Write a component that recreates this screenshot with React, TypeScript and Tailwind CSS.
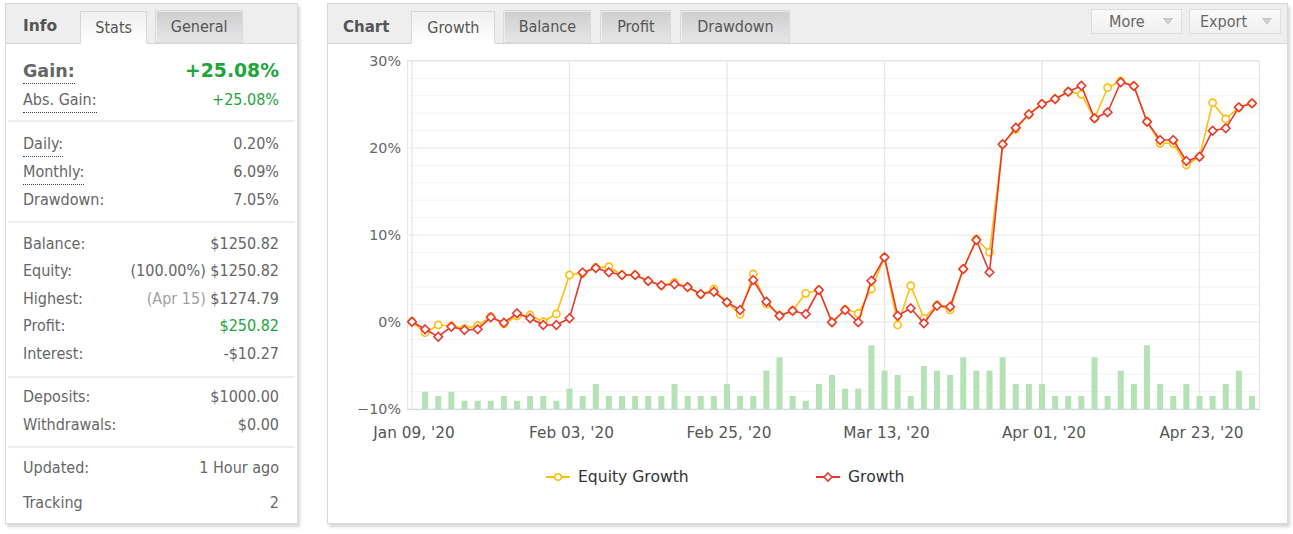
import React from "react";

const RED = [321.7, 329.3, 336.7, 326.7, 330, 329.3, 317.3, 322.7, 313.3, 318.3, 325, 325, 318.3, 272.5, 268, 272.3, 275, 275, 281, 285.3, 284.3, 287, 294, 291.7, 302.3, 310, 280, 301.7, 315.7, 310.7, 314, 290, 322.3, 310, 322.3, 280.7, 257.3, 315.7, 308.3, 323.3, 305.7, 306.7, 269, 240, 272.3, 144.3, 127.7, 114.3, 104, 99, 91.7, 85.7, 118.3, 112.3, 82.3, 86, 121.7, 140, 140, 161, 156.7, 130.7, 128.3, 107.3, 103.3];
const YEL = [321.7, 332.7, 325, 326, 328.3, 325.7, 316.7, 324, 316, 315, 321.7, 314, 275, 273.3, 267.5, 266.7, 275, 275, 281, 285.3, 282.5, 287, 294.5, 289, 302.3, 314.3, 274, 304, 315.7, 310.7, 293.3, 290, 322.3, 309.3, 313.3, 289, 257.3, 325, 285.7, 318.3, 305, 310, 269, 239, 252.3, 144.3, 129.3, 114.3, 104, 99, 91.7, 94.3, 118.3, 87.7, 81, 86, 121.7, 143.3, 143.3, 165, 156.7, 102.7, 119, 107.3, 103.3];
const BAR = [391.7, 396, 391.7, 400.7, 400.7, 400.7, 396, 400.7, 396, 396, 400.7, 388.7, 396, 384, 396, 396, 396, 396, 396, 384, 396, 396, 396, 384, 396, 396, 370.7, 357.3, 396, 400.7, 384, 375, 388.7, 388.7, 345.3, 370.7, 375, 396, 366, 370.7, 375, 357.3, 370.7, 370.7, 357.3, 384, 384, 384, 396, 396, 396, 357.3, 396, 370.7, 384, 345.3, 384, 396, 384, 396, 396, 384, 370.7, 396];

const X0 = 412;
const DX = 13.125;
const xs = (i: number) => X0 + i * DX;
const Y0 = 322;
const PER2 = 17.4;
const CHART_FONT = "'DejaVu Sans', 'Liberation Sans', sans-serif";

function Chart() {
  const hLines: { y: number; major: boolean }[] = [];
  for (let k = -5; k <= 15; k++) {
    hLines.push({ y: Y0 - k * PER2, major: k % 5 === 0 });
  }
  const ticks = [0, 12, 24, 36, 48, 60];
  const tickLabels = ["Jan 09, '20", "Feb 03, '20", "Feb 25, '20", "Mar 13, '20", "Apr 01, '20", "Apr 23, '20"];
  const yLabels = [
    { y: 61, t: "30%" },
    { y: 148, t: "20%" },
    { y: 235, t: "10%" },
    { y: 322, t: "0%" },
    { y: 409, t: "\u221210%" },
  ];
  const pts = (arr: number[]) => arr.map((y, i) => `${xs(i)},${y}`).join(" ");
  const diamond = (x: number, y: number, r: number) => `${x},${y - r} ${x + r},${y} ${x},${y + r} ${x - r},${y}`;
  return (
    <svg width={959} height={479} viewBox="328 44 959 479" className="block" fontFamily={CHART_FONT}>
      <g>
        {hLines.map((l, i) => (
          <line key={i} x1={407} x2={1260} y1={l.y} y2={l.y} stroke={l.major ? "#e6e6e6" : "#f3f3f3"} strokeWidth={1} />
        ))}
        <line x1={407} x2={1260} y1={60.5} y2={60.5} stroke="#e6e6e6" />
        <line x1={407.5} x2={407.5} y1={60} y2={409} stroke="#e6e6e6" />
        <line x1={1259.5} x2={1259.5} y1={60} y2={409} stroke="#e6e6e6" />
        {ticks.map((t) => (
          <line key={t} x1={xs(t)} x2={xs(t)} y1={60} y2={409} stroke="#e6e6e6" strokeWidth={1.3} />
        ))}
        {BAR.map((top, i) => (
          <rect key={i} x={xs(i + 1) - 3} y={top} width={6} height={409 - top} fill="#b5e2b5" />
        ))}
        <line x1={407} x2={1260} y1={409.5} y2={409.5} stroke="#ccd6eb" />
        {yLabels.map((l) => (
          <text key={l.t} x={401} y={l.y} textAnchor="end" dominantBaseline="central" fontSize={14.3} fill="#666666">
            {l.t}
          </text>
        ))}
        {ticks.map((t, i) => (
          <text key={t} x={xs(t) + 2} y={433} textAnchor="middle" dominantBaseline="central" fontSize={15.3} fill="#555555">
            {tickLabels[i]}
          </text>
        ))}
        <polyline points={pts(YEL)} fill="none" stroke="#ffbe0b" strokeWidth={1.6} strokeLinejoin="round" />
        {YEL.map((y, i) => (
          <circle key={i} cx={xs(i)} cy={y} r={3.6} fill="#ffffff" stroke="#ffbe0b" strokeWidth={1.6} />
        ))}
        <polyline points={pts(RED)} fill="none" stroke="#e8392f" strokeWidth={1.6} strokeLinejoin="round" />
        {RED.map((y, i) => (
          <polygon key={i} points={diamond(xs(i), y, 4.3)} fill="#ffffff" stroke="#e8392f" strokeWidth={1.6} />
        ))}
        {/* legend */}
        <line x1={546} x2={570} y1={477} y2={477} stroke="#ffbe0b" strokeWidth={2} />
        <circle cx={558} cy={477} r={3.3} fill="#ffffff" stroke="#ffbe0b" strokeWidth={1.6} />
        <text x={578} y={477} dominantBaseline="central" fontSize={15.6} fill="#333333">
          Equity Growth
        </text>
        <line x1={816} x2={840} y1={477} y2={477} stroke="#e8392f" strokeWidth={2} />
        <polygon points={diamond(828, 477, 4)} fill="#ffffff" stroke="#e8392f" strokeWidth={1.6} />
        <text x={848} y={477} dominantBaseline="central" fontSize={15.6} fill="#333333">
          Growth
        </text>
      </g>
    </svg>
  );
}

function Label({ children, dotted, bold }: { children: React.ReactNode; dotted?: boolean; bold?: boolean }) {
  return (
    <span
      className={
        (dotted ? "inline-block leading-[18px] pt-[4px] pb-[3px] border-b border-dotted border-[#444] " : "") +
        (bold ? "font-bold text-[17.5px] text-[#666] font-['DejaVu_Sans',sans-serif]" : "")
      }
    >
      {children}
    </span>
  );
}

function Row({ label, value, h = "h-[27.5px]", dotted, bold, valueClass = "" }: {
  label: string;
  value: React.ReactNode;
  h?: string;
  dotted?: boolean;
  bold?: boolean;
  valueClass?: string;
}) {
  return (
    <div className={`${h} flex items-center justify-between pl-[17px] pr-[18px]`}>
      <Label dotted={dotted} bold={bold}>
        {label}
      </Label>
      <span className={valueClass}>{value}</span>
    </div>
  );
}

function Sep() {
  return <div className="mx-[2px] h-[2px] bg-[#eeeeee]" />;
}

function LeftPanel() {
  return (
    <div className="w-[293px] h-[521px] border border-[#d9d9d9] bg-white shadow-[2px_3px_3px_rgba(0,0,0,0.16)] flex flex-col text-[16px] text-[#666]">
      <div className="h-[40px] shrink-0 bg-[#eeeeee] border-b border-[#d6d6d6] flex items-end pl-[17px]">
        <div className="h-[32px] flex items-center font-bold text-[#555] mr-[23px] font-['DejaVu_Sans',sans-serif] text-[15.5px]">Info</div>
        <div className="h-[33px] w-[67px] -mb-px flex items-center justify-center border border-[#d6d6d6] border-b-white bg-linear-to-b from-[#efefef] to-white text-[#555]">
          Stats
        </div>
        <div className="h-[33px] w-[88px] ml-[8px] flex items-center justify-center border border-[#dadada] bg-linear-to-b from-[#cecece] to-[#e6e6e6] text-[#555] shadow-[inset_1px_1px_0_rgba(255,255,255,0.5)]">
          General
        </div>
      </div>
      <div className="pt-[12px] pb-[6px]">
        <Row label="Gain:" value="+25.08%" h="h-[30px]" dotted bold valueClass="font-bold text-[18.8px] text-[#1ea53c] font-['DejaVu_Sans',sans-serif]" />
        <Row label="Abs. Gain:" value="+25.08%" h="h-[28px]" dotted valueClass="text-[#1ea53c]" />
      </div>
      <Sep />
      <div className="pt-[8px] pb-[7px]">
        <Row label="Daily:" value="0.20%" h="h-[28px]" dotted />
        <Row label="Monthly:" value="6.09%" h="h-[28px]" dotted />
        <Row label="Drawdown:" value="7.05%" h="h-[28px]" />
      </div>
      <Sep />
      <div className="pt-[7px] pb-[8px]">
        <Row label="Balance:" value="$1250.82" />
        <Row label="Equity:" value="(100.00%) $1250.82" />
        <Row
          label="Highest:"
          value={
            <>
              <span className="text-[#a0a0a0]">(Apr 15)</span> $1274.79
            </>
          }
        />
        <Row label="Profit:" value="$250.82" valueClass="text-[#1ea53c]" />
        <Row label="Interest:" value="-$10.27" />
      </div>
      <Sep />
      <div className="pt-[6px] pb-[7px]">
        <Row label="Deposits:" value="$1000.00" />
        <Row label="Withdrawals:" value="$0.00" />
      </div>
      <Sep />
      <div className="pt-[6px] flex flex-col gap-[7px]">
        <Row label="Updated:" value="1 Hour ago" h="h-[28px]" />
        <Row label="Tracking" value="2" h="h-[28px]" />
      </div>
    </div>
  );
}

function Tab({ children, active, w, ml }: { children: React.ReactNode; active?: boolean; w: string; ml?: string }) {
  if (active)
    return (
      <div className={`${w} ${ml ?? ""} h-[33px] -mb-px flex items-center justify-center border border-[#d6d6d6] border-b-white bg-linear-to-b from-[#efefef] to-white text-[#555]`}>
        {children}
      </div>
    );
  return (
    <div className={`${w} ${ml ?? ""} h-[33px] flex items-center justify-center border border-[#dadada] bg-linear-to-b from-[#cecece] to-[#e6e6e6] text-[#555] shadow-[inset_1px_1px_0_rgba(255,255,255,0.5)]`}>
      {children}
    </div>
  );
}

function Caret() {
  return (
    <svg width="10" height="8" viewBox="0 0 10 8">
      <polygon points="0,0 10,0 5,7" fill="#c4c4c4" />
      <polygon points="2.5,1.5 7.5,1.5 5,5" fill="#d8d8d8" />
    </svg>
  );
}

function ChartPanel() {
  return (
    <div className="w-[961px] h-[521px] border border-[#d9d9d9] bg-white shadow-[2px_3px_3px_rgba(0,0,0,0.16)] flex flex-col text-[16px]">
      <div className="h-[40px] shrink-0 bg-[#eeeeee] border-b border-[#d6d6d6] flex items-end pl-[15px] pr-[6px]">
        <div className="h-[32px] flex items-center font-bold text-[#555] mr-[22px] font-['DejaVu_Sans',sans-serif] text-[15px]">Chart</div>
        <Tab active w="w-[84px]">Growth</Tab>
        <Tab w="w-[88px]" ml="ml-[8px]">Balance</Tab>
        <Tab w="w-[71px]" ml="ml-[9px]">Profit</Tab>
        <Tab w="w-[110px]" ml="ml-[9px]">Drawdown</Tab>
        <div className="ml-auto self-start mt-[5px] flex gap-[7px]">
          <div className="w-[91px] h-[25px] border border-[#dedede] bg-linear-to-b from-[#fafafa] to-[#f0f0f0] flex items-center justify-between pl-[17px] pr-[8px] text-[#666]">
            <span>More</span>
            <Caret />
          </div>
          <div className="w-[92px] h-[25px] border border-[#dedede] bg-linear-to-b from-[#fafafa] to-[#f0f0f0] flex items-center justify-between pl-[10px] pr-[8px] text-[#666]">
            <span>Export</span>
            <Caret />
          </div>
        </div>
      </div>
      <div className="flex-1">
        <Chart />
      </div>
    </div>
  );
}

export default function App() {
  return (
    <div className="w-[1293px] h-[534px] bg-white flex items-start pl-[5px] pt-[3px] gap-[29px] font-['DejaVu_Sans_Condensed','Liberation_Sans',sans-serif]">
      <LeftPanel />
      <ChartPanel />
    </div>
  );
}
